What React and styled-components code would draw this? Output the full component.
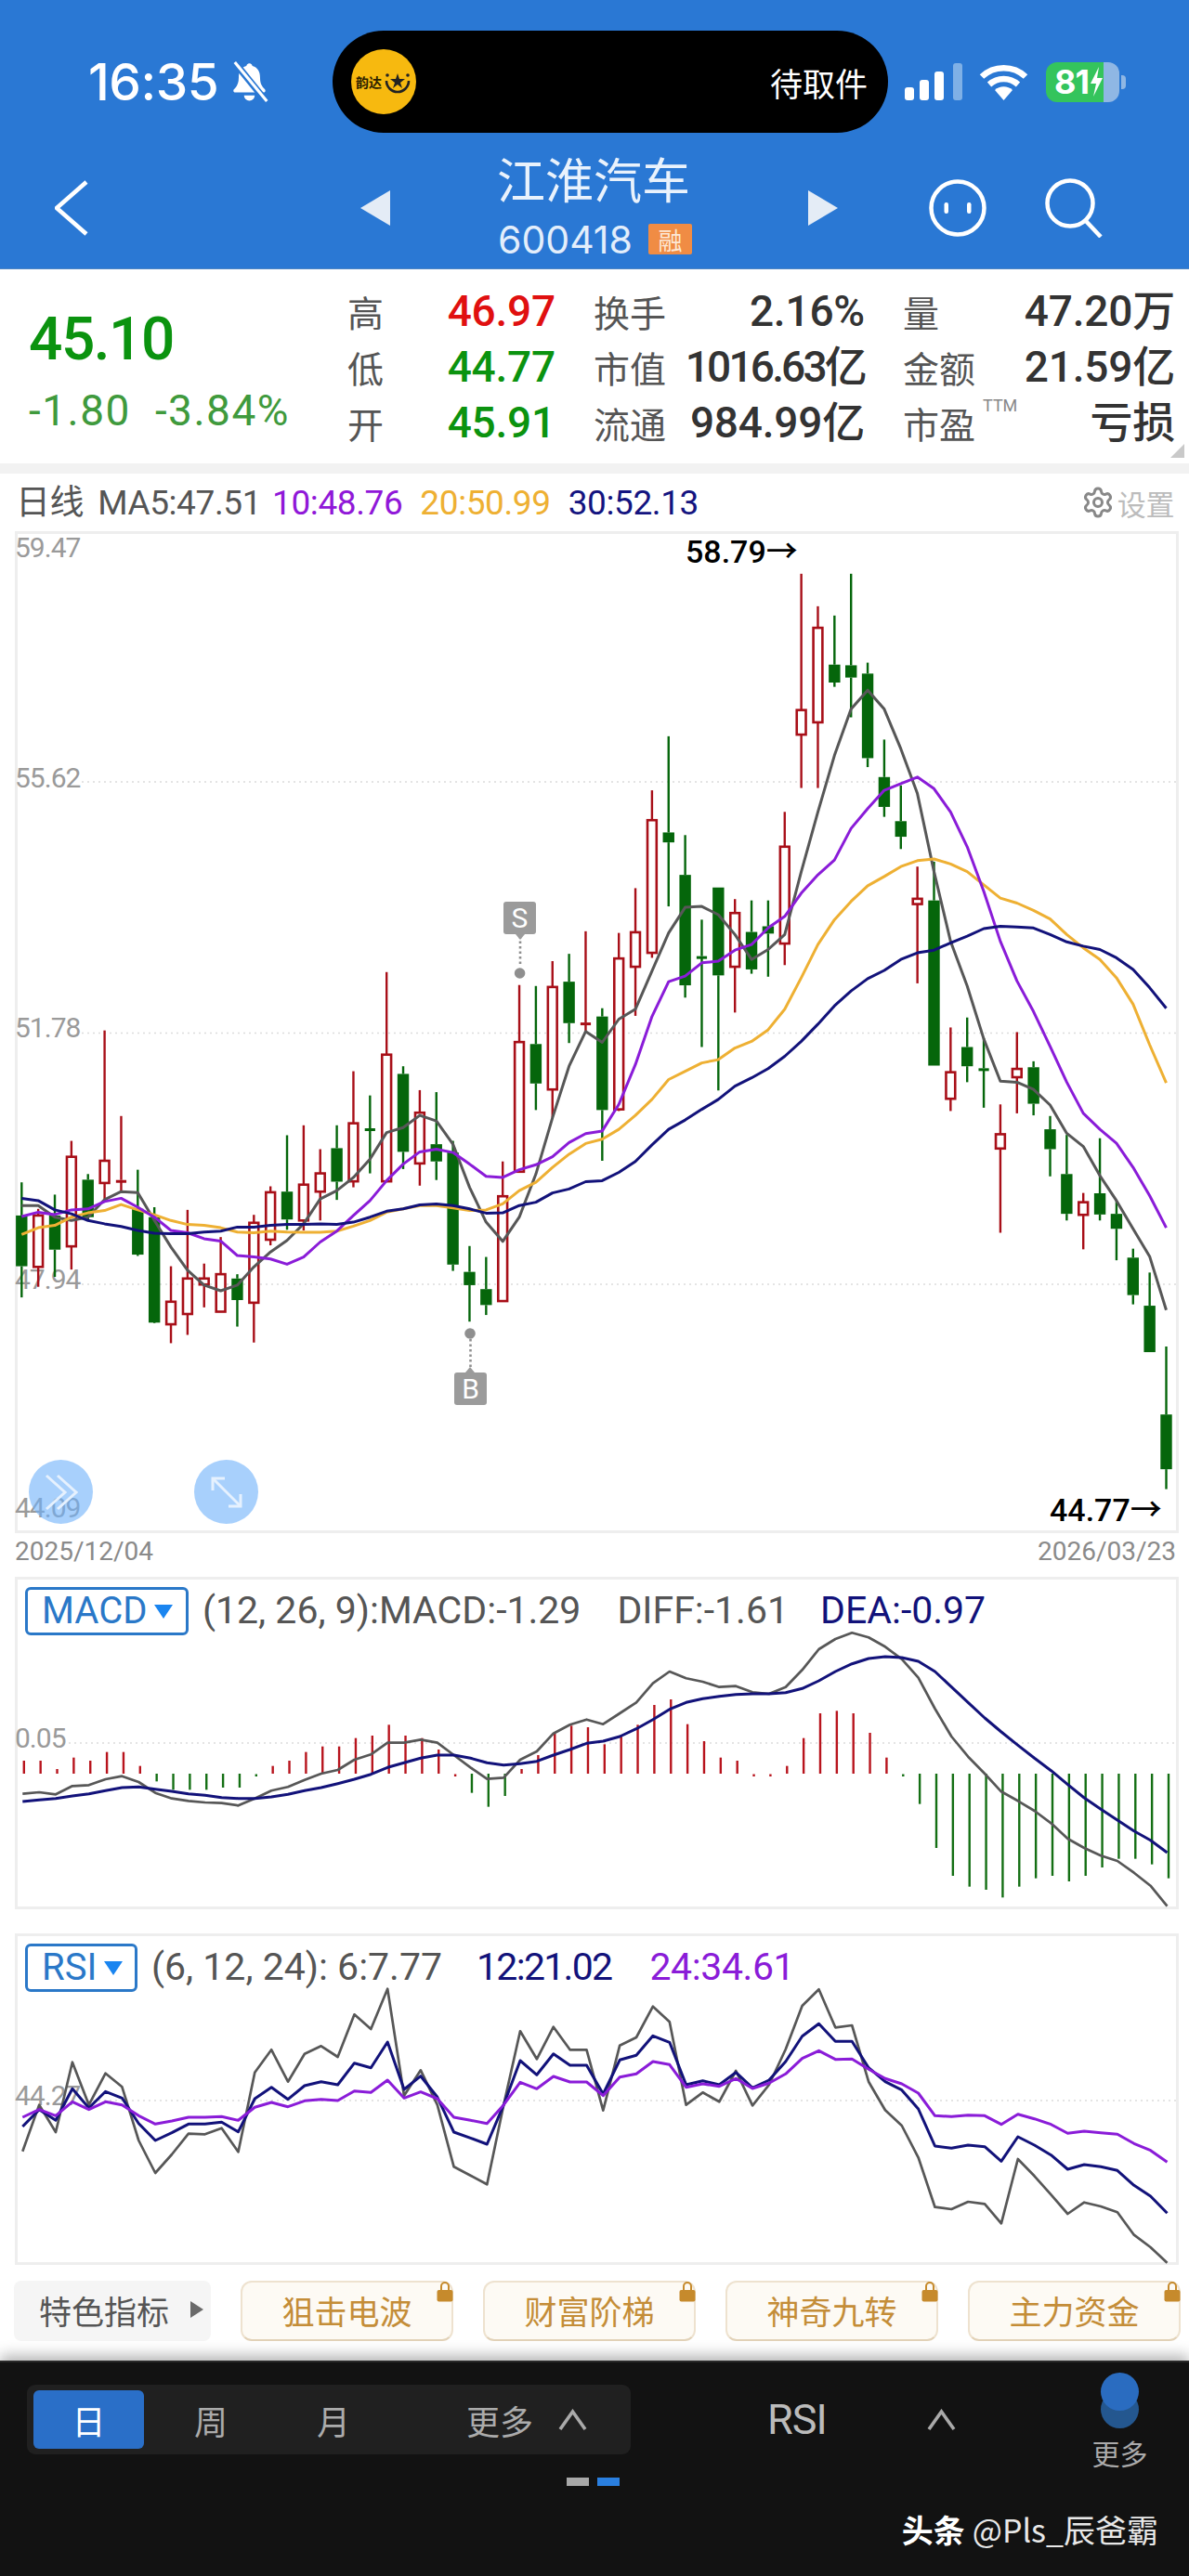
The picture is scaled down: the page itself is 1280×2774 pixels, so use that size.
import React from "react";
import styled, { createGlobalStyle } from "styled-components";
import { Settings } from "lucide-react";

const SANS = `Roboto, "Noto Sans CJK SC", sans-serif`;
const CJK = `"Noto Sans CJK SC", Roboto, sans-serif`;

const Global = createGlobalStyle`
  html, body { margin: 0; padding: 0; background: #fff; }
  body { width: 1280px; height: 2774px; overflow: hidden; font-family: ${SANS}; }
  * { box-sizing: border-box; }
`;

/* ---------- chart data: page x from candle index, y from measured offsets ---------- */
const X = (i) => 23.3 + 17.858 * i;
const Y = (z) => 1100 + z / 2.8;
const MY = (z) => 1680 + z / 3;
const RY = (z) => 2070 + z / 3;

const CANDLES = [
  [485,585,738,832,"g"],[565,585,740,800,"r"],[522,585,688,770,"g"],[360,408,678,748,"r"],[460,477,590,600,"g"],
  [27,420,487,535,"r"],[285,478,482,515,"r"],[447,565,703,707,"g"],[560,590,908,910,"g"],[738,845,913,970,"r"],
  [568,775,882,945,"r"],[730,775,793,862,"r"],[650,762,875,875,"r"],[762,775,840,920,"g"],[583,607,848,968,"r"],
  [497,515,658,675,"r"],[343,513,597,628,"g"],[313,492,600,630,"r"],[385,458,513,600,"r"],[313,382,483,538,"g"],
  [150,307,482,500,"r"],[223,322,326,458,"g"],[-149,100,482,482,"r"],[135,158,393,445,"g"],[207,275,428,495,"r"],
  [213,370,422,478,"g"],[360,395,733,752,"g"],[677,755,795,905,"g"],[710,807,855,885,"g"],[422,527,843,843,"r"],
  [-110,62,453,453,"r"],[-107,68,187,267,"g"],[-182,-104,205,290,"r"],[-204,-120,5,65,"g"],[-272,3,7,30,"r"],
  [-40,-15,267,420,"g"],[-267,-190,265,270,"r"],[-402,-269,-165,-17,"r"],[-697,-607,-207,-192,"r"],[-860,-570,-540,-347,"g"],
  [-562,-442,-109,-72,"g"],[-307,-197,-193,77,"g"],[-404,-404,-139,208,"g"],[-369,-327,-165,-27,"r"],[-365,-270,-157,-144,"g"],
  [-365,-287,-265,-135,"g"],[-632,-527,-235,-170,"r"],[-1350,-939,-865,-704,"r"],[-1252,-1187,-902,-704,"r"],[-1224,-1076,-1022,-1009,"g"],
  [-1350,-1074,-1037,-917,"g"],[-1082,-1049,-794,-767,"g"],[-850,-737,-647,-617,"g"],[-712,-604,-557,-520,"g"],[-467,-370,-354,-115,"r"],
  [-482,-365,133,133,"g"],[18,153,233,270,"r"],[-12,77,135,183,"g"],[50,141,145,260,"g"],[250,340,383,637,"r"],
  [32,143,168,277,"r"],[120,138,248,283,"g"],[285,325,385,467,"g"],[342,460,580,600,"g"],[517,545,583,687,"r"],
  [352,518,582,600,"g"],[540,580,625,720,"g"],[685,712,825,853,"g"],[757,857,997,997,"g"],[980,1185,1350,1410,"g"],
];

const MA5 = [555,555,590,600,590,537,513,516,600,680,750,795,812,795,740,695,660,610,535,510,470,415,335,320,283,300,370,500,605,663,590,460,290,135,30,63,-7,-37,-152,-267,-344,-347,-322,-262,-187,-217,-262,-452,-632,-802,-942,-999,-942,-822,-687,-452,-242,-107,53,180,183,205,252,337,377,465,540,625,708,870];
const MA10 = [588,575,582,568,565,543,533,560,590,630,637,655,662,706,710,716,732,710,665,632,585,540,480,430,393,385,395,430,467,470,447,432,408,365,338,330,250,130,-15,-120,-137,-177,-182,-215,-232,-282,-317,-387,-442,-487,-582,-642,-697,-717,-737,-702,-632,-527,-392,-242,-122,-30,75,183,277,325,367,440,525,622];
const MA20 = [642,622,615,590,577,570,552,568,583,600,612,615,622,635,637,632,635,636,636,632,617,600,575,565,555,555,562,570,568,550,510,485,440,400,368,355,325,283,235,175,150,125,115,80,60,25,-37,-132,-232,-307,-362,-409,-437,-467,-485,-490,-475,-452,-412,-372,-357,-335,-309,-262,-222,-187,-132,-52,70,185];
const MA30 = [533,540,568,580,600,610,618,630,638,640,640,635,632,620,620,615,612,612,610,612,605,590,572,565,553,550,555,565,578,577,555,545,517,505,483,480,455,422,372,325,297,265,235,195,170,142,105,60,8,-47,-92,-129,-154,-187,-207,-215,-237,-257,-280,-287,-285,-282,-262,-240,-227,-217,-192,-157,-102,-40];

const HIST = [648,648,675,638,648,620,620,665,715,742,742,742,735,735,697,665,648,620,602,602,575,567,532,567,575,612,697,752,797,762,675,630,560,535,540,595,565,532,468,450,530,585,638,648,685,697,665,575,495,487,495,558,638,697,788,930,1020,1055,1065,1090,1055,1028,1020,1038,1020,993,965,965,983,1028];
const HIST_GREEN = new Set([8,9,10,11,12,13,14,27,28,29,53,54,55,56,57,58,59,60,61,62,63,64,65,66,67,68,69]);
const DIFF = [755,750,757,730,727,708,698,717,752,770,778,783,785,793,770,745,733,710,690,678,645,628,590,590,580,590,630,670,707,703,645,618,560,532,515,530,495,460,398,360,382,393,410,407,427,432,410,355,288,255,235,250,280,320,380,480,570,635,690,748,778,810,850,900,930,955,972,1010,1052,1118];
const DEA = [780,775,770,762,755,745,735,733,740,747,755,760,767,770,770,765,757,745,735,722,708,692,670,655,640,630,630,640,655,662,658,650,630,612,592,585,570,545,515,482,460,448,440,434,432,432,428,415,390,360,335,318,312,315,327,360,410,460,510,555,598,640,680,725,768,805,840,875,905,945];

const RSI6 = [740,590,678,452,590,488,532,705,810,750,683,685,665,742,485,412,515,425,400,435,298,345,215,560,478,590,790,818,847,590,352,442,338,412,412,608,398,372,272,322,590,550,580,480,592,525,410,270,217,340,333,515,607,657,760,920,927,903,910,973,765,820,880,942,905,918,937,1010,1050,1100];
const RSI12 = [660,605,640,538,600,547,568,650,705,680,652,652,646,677,570,533,572,528,515,525,455,470,387,540,497,565,678,697,717,590,447,493,425,462,462,555,445,430,367,388,525,512,525,485,535,510,450,368,328,385,385,470,515,542,603,723,730,720,725,772,693,720,752,798,783,790,802,850,885,940];
const RSI24 = [630,605,625,580,605,580,590,625,652,642,630,630,628,640,598,582,596,577,572,576,545,550,510,568,548,570,630,640,650,590,517,538,498,516,516,560,500,490,450,460,533,522,530,505,537,520,490,440,415,443,442,475,505,522,552,625,628,623,625,653,620,635,653,682,675,680,685,715,737,775];

const pts = (arr, toY, dx = 0) =>
  arr.map((z, i) => `${(X(i) + dx).toFixed(1)},${toY(z).toFixed(1)}`).join(" ");

const RED = "#a80f18";
const GREEN = "#05660b";

/* ---------- page shell ---------- */
const Page = styled.div`
  width: 1280px;
  height: 2774px;
  display: flex;
  flex-direction: column;
  background: #fff;
`;

/* ---------- header ---------- */
const Header = styled.header`
  height: 290px;
  background: #2a78d4;
  border-bottom: 1px solid #4f86c4;
  color: #fff;
  display: flex;
  flex-direction: column;
`;
const StatusBar = styled.div`
  height: 166px;
  display: flex;
  align-items: center;
  padding: 10px 0 0 95px;
`;
const Time = styled.div`
  flex: none;
  width: 138px;
  font: 500 55px/1 Inter, sans-serif;
  letter-spacing: -0.5px;
  white-space: nowrap;
`;
const BellIcon = styled.svg`
  flex: none;
  width: 44px;
  height: 46px;
  margin-left: 14px;
`;
const Island = styled.div`
  flex: none;
  width: 598px;
  height: 110px;
  margin-left: 67px;
  border-radius: 55px;
  background: #000;
  display: flex;
  align-items: center;
  justify-content: space-between;
  padding: 0 22px 0 20px;
`;
const Badge = styled.div`
  width: 70px;
  height: 70px;
  border-radius: 50%;
  background: #f7b90f;
  display: flex;
  align-items: center;
  justify-content: center;
  gap: 2px;
`;
const BadgeText = styled.span`
  font: 700 14px/1 ${CJK};
  color: #2a2000;
  white-space: nowrap;
`;
const IslandText = styled.span`
  font: 400 35px/1 ${CJK};
  color: #fff;
`;
const SignalIcon = styled.svg`
  flex: none;
  width: 62px;
  height: 40px;
  margin-left: 18px;
`;
const WifiIcon = styled.svg`
  flex: none;
  width: 53px;
  height: 40px;
  margin-left: 18px;
`;
const Battery = styled.div`
  flex: none;
  position: relative;
  width: 79px;
  height: 43px;
  margin-left: 19px;
  border-radius: 12px;
  background: linear-gradient(90deg, #34c45c 0 78%, #8fb7e4 78% 100%);
  display: flex;
  align-items: center;
  padding-left: 9px;
  font: 700 36px/1 Inter, sans-serif;
  letter-spacing: -1px;
  color: #fff;
  &::after {
    content: "";
    position: absolute;
    right: -7px;
    top: 14px;
    width: 5px;
    height: 15px;
    border-radius: 0 4px 4px 0;
    background: #8fb7e4;
  }
`;
const BoltIcon = styled.svg`
  width: 15px;
  height: 32px;
  margin-left: 1px;
`;

const NavBar = styled.div`
  height: 116px;
  display: flex;
  align-items: center;
  padding-left: 59px;
`;
const BackIcon = styled.svg`
  flex: none;
  width: 36px;
  height: 60px;
`;
const PrevIcon = styled.svg`
  flex: none;
  width: 32px;
  height: 38px;
  margin-left: 293px;
`;
const TitleBlock = styled.div`
  flex: none;
  width: 215px;
  margin: -10px 0 0 115px;
  display: flex;
  flex-direction: column;
  align-items: flex-start;
`;
const Title = styled.div`
  font: 400 52px/56px ${CJK};
  color: #e9f2fc;
  white-space: nowrap;
`;
const CodeRow = styled.div`
  display: flex;
  align-items: center;
  margin-top: 21px;
  margin-left: 1px;
  gap: 17px;
`;
const Code = styled.span`
  flex: none;
  font: 400 41px/34px Inter, sans-serif;
  color: #e3eefb;
`;
const Tag = styled.span`
  flex: none;
  width: 47px;
  height: 33px;
  background: #f08c44;
  border-radius: 2px;
  display: flex;
  align-items: center;
  justify-content: center;
  font: 400 26px/1 ${CJK};
  color: #fde8d6;
`;
const NextIcon = styled.svg`
  flex: none;
  width: 32px;
  height: 38px;
  margin-left: 120px;
`;
const FaceIcon = styled.svg`
  flex: none;
  width: 62px;
  height: 62px;
  margin-left: 98px;
`;
const SearchIcon = styled.svg`
  flex: none;
  width: 62px;
  height: 64px;
  margin-left: 63px;
`;

/* ---------- quote panel ---------- */
const Quote = styled.section`
  position: relative;
  height: 209px;
  display: flex;
  padding-top: 15px;
  background: #fff;
  &::after {
    content: "";
    position: absolute;
    right: 5px;
    bottom: 6px;
    border-style: solid;
    border-width: 0 0 15px 15px;
    border-color: transparent transparent #c9c9c9 transparent;
  }
`;
const PriceBlock = styled.div`
  width: 374px;
  padding: 25px 0 0 31px;
  display: flex;
  flex-direction: column;
`;
const Price = styled.div`
  font: 500 64px/72px ${SANS};
  letter-spacing: -1.5px;
  color: #0b930f;
`;
const Change = styled.div`
  margin-top: 15px;
  display: flex;
  gap: 26px;
  font: 400 46px/50px ${SANS};
  letter-spacing: 1.5px;
  color: #3f9a3d;
  white-space: nowrap;
`;
const Stats = styled.div`
  display: grid;
  grid-template-columns: 224px 292px 293px;
  grid-auto-rows: 60px;
  column-gap: 41px;
`;
const Stat = styled.div`
  position: relative;
  display: flex;
  align-items: center;
  justify-content: space-between;
`;
const StatLabel = styled.span`
  font: 400 39px/1 ${CJK};
  color: #555;
`;
const StatValue = styled.span`
  font: 500 46px/1 ${SANS};
  color: ${(p) => p.$color || "#333"};
  letter-spacing: ${(p) => p.$spacing || "-0.2px"};
  white-space: nowrap;
`;
const Superscript = styled.span`
  position: absolute;
  left: 86px;
  top: 3px;
  font: 400 18px/1 ${SANS};
  color: #888;
`;
const Divider = styled.div`
  height: 11px;
  background: #f2f2f2;
`;

/* ---------- MA legend ---------- */
const Legend = styled.div`
  height: 62px;
  display: flex;
  align-items: center;
  padding: 0 16px 0 17px;
  font: 400 37px/1 ${SANS};
  letter-spacing: -0.4px;
  white-space: nowrap;
`;
const LegendItem = styled.span`
  color: ${(p) => p.$color};
  margin-left: ${(p) => p.$gap}px;
`;
const SettingsLink = styled.div`
  margin-left: auto;
  display: flex;
  align-items: center;
  gap: 3px;
  color: #bcbcbc;
  font: 400 31px/1 ${CJK};
  svg { color: #888; }
`;

/* ---------- chart panes ---------- */
const Pane = styled.div`
  position: relative;
  width: 1253px;
  height: ${(p) => p.$h}px;
  margin-left: 16px;
  border: 3px solid #eee;
`;
const PaneDrawing = styled.svg`
  position: absolute;
  left: -3px;
  top: -3px;
  width: 1253px;
  height: ${(p) => p.$h}px;
`;
const Axis = styled.span`
  position: absolute;
  left: -3px;
  top: ${(p) => p.$top}px;
  font: 400 30px/28px ${SANS};
  letter-spacing: -1px;
  color: #9a9a9a;
`;
const Extreme = styled.span`
  position: absolute;
  left: ${(p) => p.$left}px;
  top: ${(p) => p.$top}px;
  font: 500 34px/32px ${SANS};
  color: #000;
  white-space: nowrap;
`;
const Signal = styled.span`
  position: absolute;
  left: ${(p) => p.$left}px;
  top: ${(p) => p.$top}px;
  width: 35px;
  height: 35px;
  background: #9b9b9b;
  border-radius: 3px;
  color: #fff;
  font: 400 30px/35px ${SANS};
  text-align: center;
`;
const RoundButton = styled.div`
  position: absolute;
  left: ${(p) => p.$left}px;
  top: 997px;
  width: 69px;
  height: 69px;
  border-radius: 50%;
  background: rgba(110, 177, 250, 0.6);
  display: flex;
  align-items: center;
  justify-content: center;
`;
const DateRow = styled.div`
  height: 47px;
  display: flex;
  justify-content: space-between;
  padding: 4px 14px 0 16px;
  font: 400 28px/32px ${SANS};
  color: #8a8a8a;
`;
const IndicatorHead = styled.div`
  position: relative;
  z-index: 1;
  display: flex;
  align-items: flex-start;
  padding: 8px 0 0 8px;
  font: 400 41px/50px ${SANS};
  white-space: nowrap;
  color: #555;
`;
const Selector = styled.div`
  flex: none;
  width: ${(p) => p.$w}px;
  height: 52px;
  margin-right: 15px;
  border: 3px solid #2a78c8;
  border-radius: 6px;
  background: #fff;
  color: #2a78c8;
  display: flex;
  align-items: center;
  padding-left: 15px;
  font-size: 40px;
  line-height: 46px;
  &::after {
    content: "";
    margin-left: 8px;
    border-style: solid;
    border-width: 15px 10px 0 10px;
    border-color: #1a85f0 transparent transparent transparent;
  }
`;
const Reading = styled.span`
  color: ${(p) => p.$color || "#555"};
  margin-left: ${(p) => p.$gap || 0}px;
  letter-spacing: ${(p) => p.$spacing || "0"};
`;
const PaneGap = styled.div`
  height: 26px;
`;

/* ---------- indicator shortcuts ---------- */
const Shortcuts = styled.div`
  height: 65px;
  margin: 17px 0 0 15px;
  display: flex;
  gap: 32px;
`;
const FeatureTab = styled.div`
  width: 212px;
  background: #f5f5f5;
  border-radius: 8px;
  display: flex;
  align-items: center;
  padding: 0 0 3px 27px;
  font: 400 35px/1 ${CJK};
  color: #555;
  white-space: nowrap;
  &::after {
    content: "";
    margin-left: 23px;
    border-style: solid;
    border-width: 9px 0 9px 14px;
    border-color: transparent transparent transparent #6a6a6a;
  }
`;
const ShortcutCard = styled.div`
  position: relative;
  flex: none;
  width: 229px;
  background: #fdfaf4;
  border: 2px solid #eee2cf;
  border-bottom-color: #e2d2b8;
  border-radius: 12px;
  display: flex;
  align-items: center;
  justify-content: center;
  padding-bottom: 3px;
  font: 400 35px/1 ${CJK};
  color: #c48d38;
`;
const LockIcon = styled.svg`
  position: absolute;
  right: -2px;
  top: -2px;
  width: 18px;
  height: 23px;
`;

/* ---------- dark footer ---------- */
const Footer = styled.footer`
  position: relative;
  margin-top: 21px;
  flex: 1;
  background: #121212;
  border-top: 2px solid #2a2a2a;
  box-shadow: 0 -6px 14px rgba(0, 0, 0, 0.28);
  display: flex;
  flex-direction: column;
`;
const FooterTop = styled.div`
  height: 116px;
  display: flex;
  align-items: flex-start;
  padding: 24px 0 0 29px;
`;
const Periods = styled.div`
  flex: none;
  width: 650px;
  height: 75px;
  background: #202020;
  border-radius: 9px;
  display: flex;
  align-items: center;
  padding-left: 7px;
  font: 400 36px/1 ${CJK};
  color: #ababab;
`;
const Period = styled.div`
  flex: none;
  width: ${(p) => p.$w}px;
  height: 63px;
  border-radius: 6px;
  display: flex;
  align-items: center;
  justify-content: center;
  background: ${(p) => (p.$on ? "#2a6fc8" : "transparent")};
  color: ${(p) => (p.$on ? "#fff" : "inherit")};
`;
const MorePeriods = styled.div`
  margin-left: 83px;
  display: flex;
  align-items: center;
  gap: 26px;
`;
const Caret = styled.svg`
  width: 33px;
  height: 24px;
`;
const IndicatorPick = styled.div`
  flex: none;
  width: 204px;
  height: 75px;
  margin-left: 147px;
  display: flex;
  align-items: center;
  justify-content: space-between;
  font: 400 45px/1 ${SANS};
  letter-spacing: -1px;
  color: #bbb;
`;
const MoreCol = styled.div`
  flex: none;
  margin: -13px 0 0 146px;
  width: 59px;
  display: flex;
  flex-direction: column;
  align-items: center;
  font: 400 30px/1 ${CJK};
  color: #aaa;
  white-space: nowrap;
`;
const Avatar = styled.div`
  position: relative;
  width: 41px;
  height: 60px;
  margin-bottom: 11px;
  &::before, &::after {
    content: "";
    position: absolute;
    left: 0;
    width: 41px;
    height: 41px;
    border-radius: 50%;
  }
  &::before { top: 19px; background: #24578f; }
  &::after { top: 0; background: #2a6cc0; }
`;
const Pager = styled.div`
  display: flex;
  gap: 9px;
  padding-left: 610px;
  margin-top: 8px;
`;
const PagerDot = styled.span`
  width: 24px;
  height: 9px;
  background: ${(p) => (p.$on ? "#2a7fe0" : "#a8a8a8")};
`;
const Watermark = styled.div`
  display: flex;
  align-items: center;
  justify-content: flex-end;
  gap: 8px;
  margin-top: 29px;
  padding-right: 33px;
  font: 400 34px/36px ${CJK};
  color: #e8e8e8;
  white-space: nowrap;
`;
const WatermarkBrand = styled.b`
  font-weight: 700;
  color: #fff;
`;

/* ---------- drawings ---------- */
function Candles() {
  return CANDLES.map(([h, t, b, l, k], i) => {
    const x = X(i);
    const color = k === "r" ? RED : GREEN;
    const top = Y(t);
    const bot = Y(b);
    const thin = bot - top < 3;
    return (
      <g key={i}>
        <line x1={x} x2={x} y1={Y(h)} y2={top} stroke={color} strokeWidth="2.4" />
        <line x1={x} x2={x} y1={bot} y2={Y(l)} stroke={color} strokeWidth="2.4" />
        {thin ? (
          <rect x={x - 5.6} y={top} width="11.2" height="3" fill={color} />
        ) : k === "r" ? (
          <rect x={x - 4.9} y={top} width="9.8" height={bot - top} fill="#fff" stroke={color} strokeWidth="2.6" />
        ) : (
          <rect x={x - 6.2} y={top} width="12.4" height={bot - top} fill={color} />
        )}
      </g>
    );
  });
}

function Line({ data, toY, color, w = 3, dx = 0 }) {
  return <polyline points={pts(data, toY, dx)} fill="none" stroke={color} strokeWidth={w} strokeLinejoin="round" />;
}

function MainDrawing() {
  return (
    <PaneDrawing $h={1079} viewBox="16 572 1253 1079">
      {[842, 1112.5, 1383].map((y) => (
        <line key={y} x1="88" x2="1268" y1={y} y2={y} stroke="#dcdcdc" strokeWidth="1.6" strokeDasharray="2 4" />
      ))}
      <Candles />
      <Line data={MA5} toY={Y} color="#575757" />
      <Line data={MA20} toY={Y} color="#eeb033" />
      <Line data={MA10} toY={Y} color="#8a1cd8" />
      <Line data={MA30} toY={Y} color="#12127a" />
      <g stroke="#8f8f8f" strokeWidth="2.6" strokeDasharray="2.5 3" fill="none">
        <line x1="560" x2="560" y1="1008" y2="1040" />
        <line x1="506.5" x2="506.5" y1="1442" y2="1476" />
      </g>
      <circle cx="559.6" cy="1048" r="5.8" fill="#8f8f8f" />
      <circle cx="506" cy="1436" r="5.8" fill="#8f8f8f" />
      <polygon points="555,1006 565,1006 560,1012" fill="#9b9b9b" />
      <polygon points="501,1478 511,1478 506,1472" fill="#9b9b9b" />
    </PaneDrawing>
  );
}

function MacdDrawing() {
  return (
    <PaneDrawing $h={358} viewBox="16 1698 1253 358">
      <line x1="74" x2="1268" y1="1877" y2="1877" stroke="#dcdcdc" strokeWidth="1.6" strokeDasharray="2 4" />
      {HIST.map((z, i) => {
        const green = HIST_GREEN.has(i);
        const base = MY(690);
        const end = MY(z);
        const dot = Math.abs(end - base) < 3;
        return (
          <line
            key={i}
            x1={X(i) + 2.5}
            x2={X(i) + 2.5}
            y1={dot ? base + 0.5 : base}
            y2={dot ? base + 3 : end}
            stroke={green ? "#146f14" : "#b8141d"}
            strokeWidth="2.4"
          />
        );
      })}
      <Line data={DIFF} toY={MY} color="#575757" w={2.7} dx={1} />
      <Line data={DEA} toY={MY} color="#12127a" w={3} dx={1} />
    </PaneDrawing>
  );
}

function RsiDrawing() {
  return (
    <PaneDrawing $h={357} viewBox="16 2082 1253 357">
      <line x1="88" x2="1268" y1="2262" y2="2262" stroke="#dcdcdc" strokeWidth="1.6" strokeDasharray="2 4" />
      <Line data={RSI6} toY={RY} color="#575757" w={2.7} dx={1} />
      <Line data={RSI12} toY={RY} color="#12127a" w={3} dx={1} />
      <Line data={RSI24} toY={RY} color="#8a1cd8" w={3} dx={1} />
    </PaneDrawing>
  );
}

const Lock = () => (
  <LockIcon viewBox="0 0 18 23">
    <path d="M5 11V6a4 4 0 0 1 8 0v5" fill="none" stroke="#c68a2c" strokeWidth="2" />
    <rect x="0.5" y="10" width="17" height="12.5" rx="2" fill="#c68a2c" />
  </LockIcon>
);

const CaretUp = () => (
  <Caret viewBox="0 0 33 24">
    <polyline points="3,22 16.5,3 30,22" fill="none" stroke="#aaa" strokeWidth="3.6" />
  </Caret>
);

export default function App() {
  return (
    <Page>
      <Global />
      <Header>
        <StatusBar>
          <Time>16:35</Time>
          <BellIcon viewBox="0 0 41 44">
            <path d="M20 3c-1.8 0-3 1.3-3 2.8C11 7.5 9 12 9 18c0 6-2 9-5 12-1 1.300-.3 3 1.500 3h29c1.800 0 2.500-1.700 1.500-3-3-3-5-6-5-12 0-6-2-10.500-8-12.200C23 4.300 21.800 3 20 3z" fill="#fff" />
            <path d="M14.500 36a5.500 5.500 0 0 0 11 0z" fill="#fff" />
            <line x1="4" y1="1" x2="38" y2="43" stroke="#2a78d4" strokeWidth="7" />
            <line x1="5" y1="2" x2="38" y2="42" stroke="#fff" strokeWidth="3" />
          </BellIcon>
          <Island>
            <Badge>
              <BadgeText>韵达</BadgeText>
              <svg width="30" height="30" viewBox="0 0 30 30">
                <polygon points="15,6 17,12 23,12 18,16 20,22 15,18 10,22 12,16 7,12 13,12" fill="#222" />
                <path d="M3 14a12 12 0 0 0 24 0" fill="none" stroke="#222" strokeWidth="2.6" />
                <circle cx="4" cy="8" r="1.800" fill="#222" />
                <circle cx="26" cy="8" r="1.800" fill="#222" />
              </svg>
            </Badge>
            <IslandText>待取件</IslandText>
          </Island>
          <SignalIcon viewBox="0 0 62 40">
            <rect x="0" y="26" width="10" height="14" rx="3" fill="#fff" />
            <rect x="16" y="18" width="10" height="22" rx="3" fill="#fff" />
            <rect x="32" y="9" width="10" height="31" rx="3" fill="#fff" />
            <rect x="52" y="0" width="10" height="40" rx="3" fill="#7fb0e6" />
          </SignalIcon>
          <WifiIcon viewBox="0 0 53 40">
            <path d="M3 14.500C16 2 37 2 50 14.500" fill="none" stroke="#fff" strokeWidth="6.500" />
            <path d="M11 23c9-8 22-8 31 0" fill="none" stroke="#fff" strokeWidth="6.500" />
            <path d="M17 29c5-5 14-5 19 0L26.500 40z" fill="#fff" />
          </WifiIcon>
          <Battery>
            81
            <BoltIcon viewBox="0 0 15 32">
              <polygon points="10,0 1,18 7,18 4,32 14,12 8,12" fill="#fff" />
            </BoltIcon>
          </Battery>
        </StatusBar>
        <NavBar>
          <BackIcon viewBox="0 0 36 60">
            <polyline points="34,2 2,30 34,58" fill="none" stroke="#fff" strokeWidth="4.600" />
          </BackIcon>
          <PrevIcon viewBox="0 0 32 38">
            <polygon points="32,0 32,38 0,19" fill="#e4ecf6" />
          </PrevIcon>
          <TitleBlock>
            <Title>江淮汽车</Title>
            <CodeRow>
              <Code>600418</Code>
              <Tag>融</Tag>
            </CodeRow>
          </TitleBlock>
          <NextIcon viewBox="0 0 32 38">
            <polygon points="0,0 0,38 32,19" fill="#e4ecf6" />
          </NextIcon>
          <FaceIcon viewBox="0 0 62 62">
            <circle cx="31" cy="31" r="28.500" fill="none" stroke="#fff" strokeWidth="4.500" />
            <rect x="16.500" y="25" width="4.500" height="12" rx="2.200" fill="#fff" />
            <rect x="41" y="25" width="4.500" height="12" rx="2.200" fill="#fff" />
          </FaceIcon>
          <SearchIcon viewBox="0 0 62 64">
            <circle cx="27" cy="27" r="24.500" fill="none" stroke="#fff" strokeWidth="4.500" />
            <line x1="44" y1="46" x2="60" y2="63" stroke="#fff" strokeWidth="4.500" />
          </SearchIcon>
        </NavBar>
      </Header>

      <Quote>
        <PriceBlock>
          <Price>45.10</Price>
          <Change>
            <span>-1.80</span>
            <span>-3.84%</span>
          </Change>
        </PriceBlock>
        <Stats>
          <Stat><StatLabel>高</StatLabel><StatValue $color="#e01010">46.97</StatValue></Stat>
          <Stat><StatLabel>换手</StatLabel><StatValue>2.16%</StatValue></Stat>
          <Stat><StatLabel>量</StatLabel><StatValue>47.20万</StatValue></Stat>
          <Stat><StatLabel>低</StatLabel><StatValue $color="#0b930f">44.77</StatValue></Stat>
          <Stat><StatLabel>市值</StatLabel><StatValue $spacing="-2.8px">1016.63亿</StatValue></Stat>
          <Stat><StatLabel>金额</StatLabel><StatValue>21.59亿</StatValue></Stat>
          <Stat><StatLabel>开</StatLabel><StatValue $color="#0b930f">45.91</StatValue></Stat>
          <Stat><StatLabel>流通</StatLabel><StatValue>984.99亿</StatValue></Stat>
          <Stat>
            <StatLabel>市盈</StatLabel>
            <Superscript>TTM</Superscript>
            <StatValue>亏损</StatValue>
          </Stat>
        </Stats>
      </Quote>
      <Divider />

      <Legend>
        <LegendItem $color="#555" $gap={0}>日线</LegendItem>
        <LegendItem $color="#555" $gap={15}>MA5:47.51</LegendItem>
        <LegendItem $color="#9018d8" $gap={12}>10:48.76</LegendItem>
        <LegendItem $color="#eeb033" $gap={19}>20:50.99</LegendItem>
        <LegendItem $color="#141480" $gap={19}>30:52.13</LegendItem>
        <SettingsLink>
          <Settings size={36} strokeWidth={2} />
          设置
        </SettingsLink>
      </Legend>

      <Pane $h={1079}>
        <Axis $top={1}>59.47</Axis>
        <Axis $top={249}>55.62</Axis>
        <Axis $top={518}>51.78</Axis>
        <Axis $top={789}>47.94</Axis>
        <Axis $top={1035}>44.09</Axis>
        <MainDrawing />
        <Extreme $left={719} $top={3}>58.79→</Extreme>
        <Extreme $left={1111} $top={1035}>44.77→</Extreme>
        <Signal $left={523} $top={396}>S</Signal>
        <Signal $left={470} $top={903}>B</Signal>
        <RoundButton $left={12}>
          <svg width="44" height="44" viewBox="0 0 44 44" fill="none" stroke="#e6f1fe" strokeWidth="3">
            <polyline points="6,4 26,22 6,40" />
            <polyline points="18,4 38,22 18,40" />
          </svg>
        </RoundButton>
        <RoundButton $left={190}>
          <svg width="40" height="40" viewBox="0 0 40 40" fill="none" stroke="#e6f1fe" strokeWidth="3">
            <line x1="5" y1="5" x2="35" y2="35" />
            <polyline points="5,18 5,5 18,5" />
            <polyline points="22,35 35,35 35,22" />
          </svg>
        </RoundButton>
      </Pane>
      <DateRow>
        <span>2025/12/04</span>
        <span>2026/03/23</span>
      </DateRow>

      <Pane $h={358}>
        <Axis $top={157}>0.05</Axis>
        <MacdDrawing />
        <IndicatorHead>
          <Selector $w={176}>MACD</Selector>
          <Reading>(12, 26, 9):MACD:-1.29</Reading>
          <Reading $gap={39}>DIFF:-1.61</Reading>
          <Reading $color="#12127a" $gap={34}>DEA:-0.97</Reading>
        </IndicatorHead>
      </Pane>
      <PaneGap />
      <Pane $h={357}>
        <Axis $top={158}>44.27</Axis>
        <RsiDrawing />
        <IndicatorHead>
          <Selector $w={121}>RSI</Selector>
          <Reading>(6, 12, 24): 6:7.77</Reading>
          <Reading $color="#12127a" $gap={37} $spacing="-1.7px">12:21.02</Reading>
          <Reading $color="#8a1cd8" $gap={41} $spacing="-0.4px">24:34.61</Reading>
        </IndicatorHead>
      </Pane>

      <Shortcuts>
        <FeatureTab>特色指标</FeatureTab>
        <ShortcutCard>狙击电波<Lock /></ShortcutCard>
        <ShortcutCard>财富阶梯<Lock /></ShortcutCard>
        <ShortcutCard>神奇九转<Lock /></ShortcutCard>
        <ShortcutCard>主力资金<Lock /></ShortcutCard>
      </Shortcuts>

      <Footer>
        <FooterTop>
          <Periods>
            <Period $w={119} $on>日</Period>
            <Period $w={144}>周</Period>
            <Period $w={120}>月</Period>
            <MorePeriods>
              更多
              <CaretUp />
            </MorePeriods>
          </Periods>
          <IndicatorPick>
            RSI
            <CaretUp />
          </IndicatorPick>
          <MoreCol>
            <Avatar />
            更多
          </MoreCol>
        </FooterTop>
        <Pager>
          <PagerDot />
          <PagerDot $on />
        </Pager>
        <Watermark>
          <WatermarkBrand>头条</WatermarkBrand>
          @Pls_辰爸霸
        </Watermark>
      </Footer>
    </Page>
  );
}
